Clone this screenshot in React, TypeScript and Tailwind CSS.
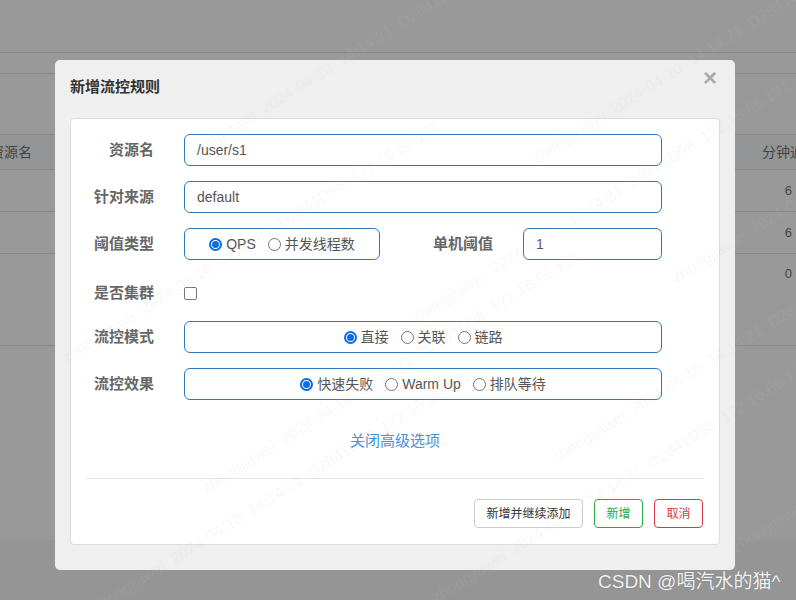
import React from 'react';

const font = { fontFamily: '"Liberation Sans", "Noto Sans CJK SC", sans-serif' };

function Radio({ checked, label }: { checked?: boolean; label: string }) {
  return (
    <span className="inline-flex items-center gap-[4px]">
      {checked ? (
        <span className="w-[13px] h-[13px] rounded-full border-[2px] border-[#0b6be0] flex items-center justify-center">
          <span className="w-[7px] h-[7px] rounded-full bg-[#0b6be0]" />
        </span>
      ) : (
        <span className="w-[13px] h-[13px] rounded-full border border-[#767676] bg-white" />
      )}
      <span>{label}</span>
    </span>
  );
}

function Label({ children }: { children: React.ReactNode }) {
  return <div className="w-[83px] shrink-0 text-right font-bold text-[15px] text-[#666]">{children}</div>;
}

const boxCls = 'h-[32px] rounded-[6px] border border-[#3178b8] bg-white flex items-center text-[14px] text-[#555]';

const marks = [
  { l: 150, t: 30 }, { l: 500, t: 30 }, { l: 30, t: 230 }, { l: 380, t: 190 }, { l: 640, t: 150 },
  { l: 170, t: 360 }, { l: 520, t: 330 }, { l: 60, t: 480 }, { l: 400, t: 470 }, { l: 700, t: 420 },
];

export default function App() {
  return (
    <div className="relative w-[796px] h-[600px] overflow-hidden bg-[#999999]" style={font}>
      {/* background table */}
      <div className="flex flex-col">
        <div className="h-[53px] border-b border-[#888]" />
        <div className="h-[21px] border-b border-[#888]" />
        <div className="h-[61px] border-b border-[#888]" />
        <div className="h-[35px] border-b border-[#888] bg-[#939596] flex items-center justify-between text-[14px] text-[#444]">
          <span className="-ml-[10px]">资源名</span>
          <span className="-mr-[22px]">分钟通过</span>
        </div>
        <div className="h-[42px] border-b border-[#888] flex items-center justify-end pr-[4px] text-[13px] text-[#444]">6</div>
        <div className="h-[42px] border-b border-[#888] flex items-center justify-end pr-[4px] text-[13px] text-[#444]">6</div>
        <div className="h-[92px] border-b border-[#888] flex items-start pt-[10px] justify-end pr-[4px] text-[13px] text-[#444]">0</div>
        <div className="h-[194px]" />
        <div className="h-[60px] bg-[#959595]" />
      </div>

      {/* modal */}
      <div className="absolute left-[55px] top-[60px] w-[680px] h-[510px] rounded-[5px] bg-[#efefef] flex flex-col">
        <div className="h-[58px] flex items-center px-[15px] justify-between">
          <span className="font-bold text-[15px] text-[#333] -mt-[3px]">新增流控规则</span>
          <span className="text-[24px] font-bold text-[#aaa] leading-none -mt-[22px] mr-[3px]">×</span>
        </div>
        <div className="mx-[15px] h-[427px] rounded-[4px] border border-[#ddd] bg-white flex flex-col pt-[15px]">
          <div className="flex flex-col gap-[15px]">
            <div className="flex items-center">
              <Label>资源名</Label>
              <div className={`${boxCls} ml-[30px] w-[478px] px-[12px]`}>/user/s1</div>
            </div>
            <div className="flex items-center">
              <Label>针对来源</Label>
              <div className={`${boxCls} ml-[30px] w-[478px] px-[12px]`}>default</div>
            </div>
            <div className="flex items-center">
              <Label>阈值类型</Label>
              <div className={`${boxCls} ml-[30px] w-[196px] justify-center gap-[12px]`}>
                <Radio checked label="QPS" />
                <Radio label="并发线程数" />
              </div>
              <div className="w-[113px] text-right font-bold text-[15px] text-[#666]">单机阈值</div>
              <div className={`${boxCls} ml-[30px] w-[139px] px-[12px]`}>1</div>
            </div>
            <div className="flex items-center h-[31px] pt-[6px]">
              <Label>是否集群</Label>
              <span className="ml-[30px] w-[13px] h-[13px] rounded-[2px] border border-[#767676] bg-white" />
            </div>
            <div className="flex items-center">
              <Label>流控模式</Label>
              <div className={`${boxCls} ml-[30px] w-[478px] justify-center gap-[12px]`}>
                <Radio checked label="直接" />
                <Radio label="关联" />
                <Radio label="链路" />
              </div>
            </div>
            <div className="flex items-center">
              <Label>流控效果</Label>
              <div className={`${boxCls} ml-[30px] w-[478px] justify-center gap-[12px]`}>
                <Radio checked label="快速失败" />
                <Radio label="Warm Up" />
                <Radio label="排队等待" />
              </div>
            </div>
          </div>
          <div className="mt-[31px] h-[20px] leading-[20px] text-center text-[15px] text-[#4a8fd6]">关闭高级选项</div>
          <div className="mt-[27px] mx-[15px] border-t border-[#e5e5e5]" />
          <div className="mt-[20px] flex justify-end gap-[11px] pr-[16px]">
            <button className="h-[29px] w-[109px] rounded-[4px] border border-[#ccc] bg-white text-[12px] text-[#333]">新增并继续添加</button>
            <button className="h-[29px] w-[49px] rounded-[4px] border border-[#28a745] bg-white text-[12px] text-[#28a745]">新增</button>
            <button className="h-[29px] w-[49px] rounded-[4px] border border-[#dc3545] bg-white text-[12px] text-[#dc3545]">取消</button>
          </div>
        </div>
      </div>

      {/* watermarks */}
      {marks.map((m, i) => (
        <span
          key={i}
          className="absolute whitespace-nowrap text-[16px] text-[#c8c8c8]/[0.12] -rotate-[32deg] pointer-events-none"
          style={{ left: m.l, top: m.t }}
        >
          zhongjiawei&nbsp;&nbsp;2024-04-10&nbsp;&nbsp;14:14:21&nbsp;&nbsp;D2841D98&nbsp;&nbsp;172.16.66.131
        </span>
      ))}

      <span className="absolute left-[598px] top-[568px] text-[19px] text-[#f2f2f2] [text-shadow:0_0_1px_rgba(0,0,0,0.3)]">
        CSDN @喝汽水的猫^
      </span>
    </div>
  );
}
